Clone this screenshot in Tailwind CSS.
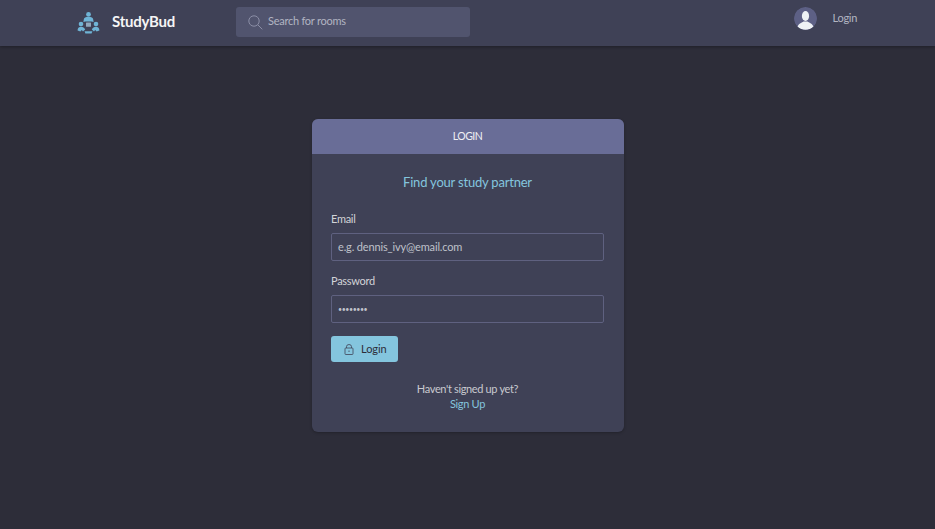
<!DOCTYPE html>
<html>
<head>
<meta charset="utf-8">
<script src="https://cdn.jsdelivr.net/npm/@tailwindcss/browser@4"></script>
</head>
<body class="h-[529px] w-[935px] overflow-hidden bg-[#2d2d39] font-['Lato',sans-serif] text-[#f5f5f5]">
<header class="flex h-[46px] items-start bg-[#3f4156] shadow-[0_1px_3px_rgba(0,0,0,0.3)]">
  <a class="ml-[77px] mt-[10px] flex w-[159px] items-center gap-[12px]">
    <svg class="h-[23px] w-[23px] shrink-0" viewBox="0 0 23 23" fill="#6fb4d6">
      <circle cx="11.5" cy="3.4" r="2.4"/>
      <path d="M6.8 8.6 C7 6.5 8.5 6 11.5 6 C14.5 6 16 6.5 16.2 8.6 L16.6 11 L14.6 10.4 H8.4 L6.4 11Z"/>
      <rect x="9" y="11.4" width="5" height="4.4" rx=".5" fill="#8fa8bd"/>
      <circle cx="4" cy="13" r="2.3"/>
      <path d="M0.6 19.6 C0.6 16.6 2.4 15.8 4.2 15.8 C6 15.8 7.2 16.6 8.2 18.6 L6 20.6 L4.8 19 L3.4 20.6 Z"/>
      <circle cx="19" cy="13" r="2.3"/>
      <path d="M22.4 19.6 C22.4 16.6 20.6 15.8 18.8 15.8 C17 15.8 15.8 16.6 14.8 18.6 L17 20.6 L18.2 19 L19.6 20.6 Z"/>
      <path d="M7.6 20.2 H15.4 L14.6 22.6 H8.4Z"/>
    </svg>
    <span class="pb-[2px] text-[15px] leading-[23px] font-bold tracking-[-0.25px]">StudyBud</span>
  </a>
  <label class="mt-[7px] flex h-[30px] w-[234px] items-center rounded-[3px] bg-[#51546e] pl-[12px]">
    <svg class="h-[15px] w-[15px] text-[#8b8ea6]" viewBox="0 0 15 15" fill="none" stroke="currentColor" stroke-width="1">
      <circle cx="6" cy="6" r="5.2"/><path d="M9.8 9.8 L14.3 14.3"/>
    </svg>
    <span class="ml-[5px] pb-[1px] text-[11px] tracking-[-0.25px] text-[#b2b5c2]">Search for rooms</span>
  </label>
  <div class="ml-auto mr-[78px] mt-[7px] flex items-center">
    <svg class="h-[23px] w-[23px] rounded-full" viewBox="0 0 23 23">
      <circle cx="11.5" cy="11.5" r="11.5" fill="#5d6085"/>
      <ellipse cx="11.5" cy="9" rx="3.6" ry="5" fill="#eef2f5"/>
      <path d="M3.5 19.5 C5 16.2 8 15.8 9.5 14.5 H13.5 C15 15.8 18 16.2 19.5 19.5 C15 23.8 8 23.8 3.5 19.5Z" fill="#eef2f5"/>
    </svg>
    <span class="ml-[16px] pb-[1px] text-[11px] leading-[22px] tracking-[-0.3px] text-[#b2b5c2]">Login</span>
  </div>
</header>
<main class="pt-[73px]">
  <section class="ml-[311.5px] h-[313px] w-[312px] overflow-hidden rounded-[6px] bg-[#3f4156] shadow-[0_1px_3px_rgba(0,0,0,0.25)]">
    <div class="flex h-[35px] items-center justify-center bg-[#696d97] pt-[1px] text-[10.5px] tracking-[-0.5px] text-[#f0f0f4]">LOGIN</div>
    <div class="px-[19.5px]">
      <h2 class="mt-[20px] text-center text-[13px] leading-[17px] tracking-[-0.2px] text-[#84c5de]">Find your study partner</h2>
      <div class="mt-[20px] text-[11px] leading-[16px] tracking-[-0.3px] text-[#d2d3d8]">Email</div>
      <div class="mt-[6px] flex h-[28px] items-center rounded-[2px] border border-[#5f6180] pl-[6px] text-[11px] tracking-[-0.15px] text-[#bfc1ca]">e.g. dennis_ivy@email.com</div>
      <div class="mt-[12px] text-[11px] leading-[16px] tracking-[-0.3px] text-[#d2d3d8]">Password</div>
      <div class="mt-[6px] flex h-[28px] items-center rounded-[2px] border border-[#5f6180] pl-[6px] text-[7px] tracking-[-0.4px] text-[#bfc1ca]">••••••••</div>
      <button class="mt-[13px] flex h-[26px] w-[67px] items-center rounded-[3px] bg-[#84c5de] pl-[13px] text-[11px] tracking-[-0.1px] text-[#2d2d39]">
        <svg class="h-[11px] w-[10px]" viewBox="0 0 9 11" fill="none" stroke="#3f4156" stroke-width=".8"><rect x=".5" y="4" width="8" height="6.5" rx=".8"/><path d="M2 4 V2.7 a2.5 2.2 0 0 1 5 0 V4"/><path d="M4.5 6.5 V8"/></svg>
        <span class="ml-[7px]">Login</span>
      </button>
      <p class="mt-[19px] text-center text-[11px] leading-[15px] tracking-[-0.35px] text-[#c8c9cf]">Haven't signed up yet?</p>
      <p class="text-center text-[11px] leading-[16px] tracking-[-0.3px] text-[#84c5de]">Sign Up</p>
    </div>
  </section>
</main>
</body>
</html>
